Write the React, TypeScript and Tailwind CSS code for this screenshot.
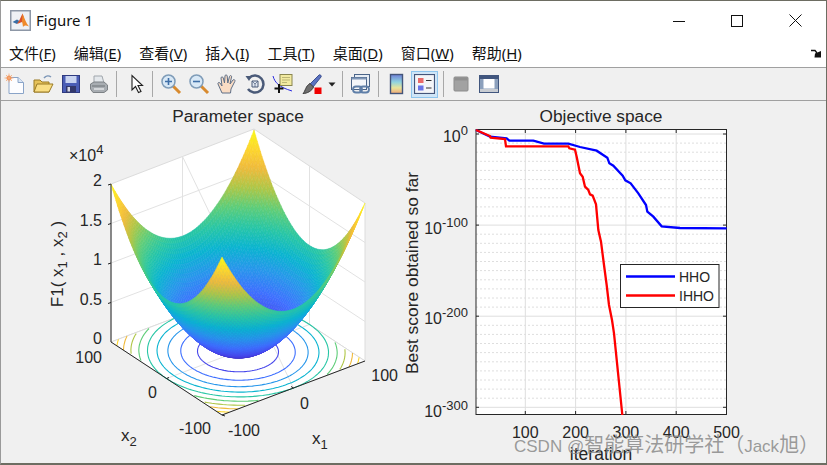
import React from "react";

const parulaStops = [
  [62, 38, 168], [71, 71, 235], [62, 111, 255], [39, 150, 235], [10, 180, 208],
  [40, 198, 165], [95, 205, 120], [175, 198, 70], [240, 186, 60], [253, 215, 45], [249, 251, 21],
];

const parula = (t: number) => {
  const v = Math.min(0.9999, Math.max(0, t)) * (parulaStops.length - 1);
  const i = Math.floor(v);
  const f = v - i;
  const c = parulaStops[i].map((a, k) => Math.round(a + (parulaStops[i + 1][k] - a) * f));
  return `rgb(${c[0]},${c[1]},${c[2]})`;
};

// 3d -> screen, axes corners read off the picture
const project = (x1: number, x2: number, z: number): [number, number] => [
  222 + ((x1 + 100) / 200) * 143 - ((x2 + 100) / 200) * 111,
  415 - ((x1 + 100) / 200) * 54 - ((x2 + 100) / 200) * 73 - (z / 20000) * 158,
];

const pt = (p: [number, number]) => `${p[0].toFixed(1)} ${p[1].toFixed(1)}`;

const buildSurface = () => {
  const n = 70;
  const step = 200 / n;
  const quads: { d: string; color: string; depth: number }[] = [];
  for (let i = 0; i < n; i++) {
    for (let j = 0; j < n; j++) {
      const a = -100 + i * step;
      const b = -100 + j * step;
      const f = (x: number, y: number) => x * x + y * y;
      const mid = f(a + step / 2, b + step / 2);
      quads.push({
        d: `M${pt(project(a, b, f(a, b)))}L${pt(project(a + step, b, f(a + step, b)))}L${pt(
          project(a + step, b + step, f(a + step, b + step))
        )}L${pt(project(a, b + step, f(a, b + step)))}Z`,
        color: parula(mid / 20000),
        depth: 111 * a + 143 * b,
      });
    }
  }
  return quads.sort((p, q) => q.depth - p.depth);
};

const buildContours = () => {
  const out: { d: string; color: string }[] = [];
  for (let level = 2000; level <= 18000; level += 2000) {
    const r = Math.sqrt(level);
    let d = "";
    let pen = false;
    for (let k = 0; k <= 360; k += 2) {
      const a = (k * Math.PI) / 180;
      const x = r * Math.cos(a);
      const y = r * Math.sin(a);
      if (Math.abs(x) > 100 || Math.abs(y) > 100) {
        pen = false;
        continue;
      }
      d += `${pen ? "L" : "M"}${pt(project(x, y, 0))}`;
      pen = true;
    }
    out.push({ d, color: parula(level / 20000) });
  }
  return out;
};

const surface = buildSurface();
const contours = buildContours();

const toPath = (pts: number[][]) => "M" + pts.map((p) => p.join(" ")).join("L");

const blueLine = [
  [228, 75], [270, 95], [320, 100], [328, 107], [400, 107], [432, 116], [505, 116], [540, 126],
  [590, 137], [622, 158], [628, 175], [640, 182], [668, 212], [676, 226], [692, 235], [715, 265],
  [738, 300], [742, 320], [760, 335], [785, 364], [840, 369], [980, 370],
].map(([x, y]) => [x / 3 + 400, y / 3 + 105]);

const redLine = [
  ...[
    [228, 75], [270, 93], [272, 98], [315, 102], [318, 124], [505, 124], [508, 130], [525, 134],
    [530, 155], [540, 205], [548, 215], [555, 245], [565, 255], [570, 268], [578, 272], [588, 298],
    [595, 375], [603, 410], [612, 480],
  ].map(([x, y]) => [x / 3 + 400, y / 3 + 105]),
  ...[[620, 0], [627, 60], [636, 105], [642, 145], [667, 390]].map(([x, y]) => [x / 3 + 400, y / 3 + 285]),
];

const xTicks = [100, 200, 300, 400, 500];
const xAt = (it: number) => 726.5 - (500 - it) * 0.503;
const yAt = (decade: number) => 134 + decade * 0.911;

const Figure = () => {
  const minor: number[] = [];
  for (let d = 10; d <= 300; d += 10) if (d % 100 !== 0) minor.push(d);
  return (
    <svg viewBox="1 101 825 362" className="block w-[825px] h-[362px] font-['Liberation_Sans',Arial,sans-serif]" fontSize="16" fill="#262626">
      {/* 3d axes */}
      <text x="238" y="122" textAnchor="middle" fontSize="17.300">Parameter space</text>
      <path d="M111 342L111 184L254 129L254 288ZM254 288L254 129L365 203L365 361Z" fill="#fff" stroke="#dcdcdc" />
      <path d="M111 342L254 288L365 361L222 415Z" fill="#fff" stroke="#dcdcdc" />
      <path
        d="M111 302.500L254 248.500L365 321.500M111 263L254 209L365 282M111 223.500L254 169.500L365 242.500M182.500 315L182.500 156.500L293.500 388M309.500 324.500L309.500 166M166.500 378.500L309.500 324.500"
        fill="none"
        stroke="#e2e2e2"
      />
      {contours.map((c, i) => (
        <path key={i} d={c.d} fill="none" stroke={c.color} strokeWidth="1.100" />
      ))}
      {surface.map((q, i) => (
        <path key={i} d={q.d} fill={q.color} stroke={q.color} strokeWidth="0.5" />
      ))}
      <path d="M111 184L111 342L222 415L365 361" fill="none" stroke="#262626" strokeWidth="1" />
      <path d="M111 184L108 185M111 223.500L108 224.500M111 263L108 264M111 302.500L108 303.500M166.500 378.500L169 377.500M293.500 388L291 386.500M222 415L225 416" stroke="#262626" fill="none" />
      <text x="69" y="161" fontSize="16">
        ×10<tspan dy="-7" fontSize="13">4</tspan>
      </text>
      <g textAnchor="end">
        <text x="102" y="186">2</text>
        <text x="102" y="226">1.5</text>
        <text x="102" y="265">1</text>
        <text x="102" y="305">0.5</text>
        <text x="102" y="344">0</text>
        <text x="102" y="363">100</text>
        <text x="157" y="398">0</text>
        <text x="211" y="434">-100</text>
        <text x="260" y="436">-100</text>
        <text x="309" y="409">0</text>
        <text x="398" y="381">100</text>
      </g>
      <text x="121" y="441" fontSize="17">
        x<tspan dy="5" fontSize="13">2</tspan>
      </text>
      <text x="312" y="444" fontSize="17">
        x<tspan dy="5" fontSize="13">1</tspan>
      </text>
      <text transform="translate(63 264) rotate(-90)" textAnchor="middle" fontSize="17">
        F1( x<tspan dy="4" fontSize="13">1</tspan>
        <tspan dy="-4"> , x</tspan>
        <tspan dy="4" fontSize="13">2</tspan>
        <tspan dy="-4"> )</tspan>
      </text>

      {/* convergence plot */}
      <text x="601" y="122" textAnchor="middle" fontSize="17.300">Objective space</text>
      <rect x="476" y="129.500" width="250.500" height="285" fill="#fff" />
      <g stroke="#dedede" fill="none">
        {minor.map((d) => (
          <path key={d} d={`M476 ${yAt(d).toFixed(1)}H726.500`} strokeDasharray="2 2" />
        ))}
        {[0, 100, 200, 300].map((d) => (
          <path key={d} d={`M476 ${yAt(d).toFixed(1)}H726.500`} />
        ))}
        {xTicks.map((t) => (
          <path key={t} d={`M${xAt(t).toFixed(1)} 129.500V414.500`} />
        ))}
      </g>
      <rect x="476" y="129.500" width="250.500" height="285" fill="none" stroke="#262626" />
      {xTicks.map((t) => (
        <path key={t} d={`M${xAt(t).toFixed(1)} 414V411M${xAt(t).toFixed(1)} 130V133`} stroke="#262626" />
      ))}
      {[0, 100, 200, 300].map((d) => (
        <path key={d} d={`M476 ${yAt(d).toFixed(1)}h3M726 ${yAt(d).toFixed(1)}h-3`} stroke="#262626" />
      ))}
      <path d={toPath(blueLine)} fill="none" stroke="#0000ff" strokeWidth="2.300" />
      <path d={toPath(redLine)} fill="none" stroke="#ff0000" strokeWidth="2.300" />
      <g textAnchor="end">
        <text x="468" y="141.500">
          10<tspan dy="-7" fontSize="13">0</tspan>
        </text>
        <text x="468" y="233.500">
          10<tspan dy="-7" fontSize="13">-100</tspan>
        </text>
        <text x="468" y="323.500">
          10<tspan dy="-7" fontSize="13">-200</tspan>
        </text>
        <text x="468" y="416.500">
          10<tspan dy="-7" fontSize="13">-300</tspan>
        </text>
      </g>
      <g textAnchor="middle">
        {xTicks.map((t) => (
          <text key={t} x={xAt(t).toFixed(1)} y="438">{t}</text>
        ))}
        <text x="601" y="460" fontSize="17.500">iteration</text>
        <text transform="translate(418 273) rotate(-90)" fontSize="17.400">Best score obtained so far</text>
      </g>
      <rect x="620.500" y="264.500" width="98.500" height="43" fill="#fff" stroke="#262626" />
      <path d="M626 276.500H675" stroke="#0000ff" strokeWidth="2.300" />
      <path d="M626 295.500H675" stroke="#ff0000" strokeWidth="2.300" />
      <text x="679" y="281.500" fontSize="14">HHO</text>
      <text x="679" y="301" fontSize="14">IHHO</text>

      <text x="514" y="452" fill="#8a8a8a" fillOpacity="0.85" fontSize="17">
        CSDN @<tspan fontSize="20" className="font-['Noto_Sans_CJK_SC',sans-serif]">智能算法研学社（</tspan>Jack<tspan fontSize="20" className="font-['Noto_Sans_CJK_SC',sans-serif]">旭）</tspan>
      </text>
    </svg>
  );
};

const MatlabLogo = () => (
  <svg width="21" height="21" viewBox="0 0 21 21">
    <rect x="0" y="0" width="21" height="21" fill="#8d97a6" />
    <rect x="1.500" y="1.500" width="18" height="18" fill="#eef1f5" />
    <path d="M2.500 12L7 9.500L9.500 11L7 14Z" fill="#3a6ea5" />
    <path d="M7 14L9.500 10L12.500 3.500L14 8L12 12Z" fill="#d9522b" />
    <path d="M12.500 3.500C14.500 8 16 13 19 16.500C16 15 14.500 15 13 17C12.500 14 12.500 13 12 12Z" fill="#ef8a2a" />
  </svg>
);

const NewIcon = () => (
  <svg width="22" height="22" viewBox="0 0 22 22">
    <path d="M5 4.500H14L19.500 9.500V20.500H5Z" fill="#fdfdff" stroke="#8aa4c8" />
    <path d="M14 4.500V9.500H19.500" fill="#dbe6f5" stroke="#8aa4c8" />
    <circle cx="5" cy="5" r="2.500" fill="#f08a4b" />
    <path d="M5 0.500V9.500M0.500 5H9.500M2 2L8 8M8 2L2 8" stroke="#f4a877" strokeWidth="0.8" />
  </svg>
);

const OpenIcon = () => (
  <svg width="22" height="22" viewBox="0 0 22 22">
    <path d="M12 5C14 2.500 17 2.500 19 4" fill="none" stroke="#7d97b8" strokeWidth="1.500" />
    <path d="M2 19V7H8L10 9H17V19Z" fill="#e6c25a" stroke="#9a7a24" />
    <path d="M2 19L5 11H21L17 19Z" fill="#f9de84" stroke="#9a7a24" />
  </svg>
);

const SaveIcon = () => (
  <svg width="22" height="22" viewBox="0 0 22 22">
    <rect x="2.500" y="2.500" width="17" height="17" fill="#4a5db5" stroke="#2f3a80" />
    <rect x="5.500" y="3" width="11" height="7" fill="#c9d4f0" />
    <rect x="6" y="13" width="10" height="6.500" fill="#33386b" />
    <rect x="7.500" y="14" width="2.500" height="4.500" fill="#d6d8e4" />
  </svg>
);

const PrintIcon = () => (
  <svg width="22" height="22" viewBox="0 0 22 22">
    <path d="M6 10V3H14L16 10Z" fill="#e4e8ec" stroke="#a0a6ac" />
    <path d="M2.500 11L6 9H16L19.500 12V17L16 19.500H5L2.500 16Z" fill="#a8adb2" stroke="#7d8286" />
    <path d="M4 13H17" stroke="#6f7478" />
    <path d="M6 16H16" stroke="#d4d7da" strokeWidth="2" />
  </svg>
);

const ArrowIcon = () => (
  <svg width="22" height="22" viewBox="0 0 22 22">
    <path d="M6 2.500V17L9.500 13.500L12.500 19.500L15 18.500L12 12.500H16.500Z" fill="#fff" stroke="#222" strokeWidth="1.100" />
  </svg>
);

const Magnifier = ({ plus }: { plus: boolean }) => (
  <svg width="22" height="22" viewBox="0 0 22 22">
    <path d="M13 13L20 20" stroke="#d88a2e" strokeWidth="3" />
    <circle cx="8.500" cy="8.500" r="6.500" fill="#d8e8f6" stroke="#7f9cb8" strokeWidth="1.500" />
    <path d={plus ? "M5 8.500H12M8.500 5V12" : "M5 8.500H12"} stroke="#3f6fa8" strokeWidth="1.600" />
  </svg>
);

const HandIcon = () => (
  <svg width="22" height="22" viewBox="0 0 22 22">
    <path
      d="M6 20L2 11C1.500 9.500 3 9 4 10L6 13L5 5C5 3.500 7 3.500 7.300 5L8.500 10L9 3C9 1.500 11 1.500 11.200 3L11.800 10L13.500 3.500C14 2 16 2.500 15.500 4L14 11L17 7C18 6 19.500 7 18.800 8.500L15 16L14.500 20Z"
      fill="#f9dcc4"
      stroke="#5f6f86"
      strokeWidth="1"
    />
  </svg>
);

const RotateIcon = () => (
  <svg width="22" height="22" viewBox="0 0 22 22">
    <path d="M5 5A8.500 8.500 0 1 1 4 16" fill="none" stroke="#4a5a78" strokeWidth="2.500" />
    <path d="M1.500 3L8 3L5 8Z" fill="#4a5a78" />
    <path d="M8 8H14V14H8Z" fill="#dfe6f0" stroke="#4a5a78" />
    <path d="M8 8L11 11L14 8M11 11V14" fill="none" stroke="#4a5a78" strokeWidth="0.700" />
  </svg>
);

const DatatipIcon = () => (
  <svg width="22" height="22" viewBox="0 0 22 22">
    <path d="M1 3C3 10 7 14 20 18" fill="none" stroke="#2a2ae0" />
    <rect x="8" y="1.500" width="12" height="11" fill="#f2eaa0" stroke="#8a8650" />
    <path d="M10 4.500H18M10 7H18M10 9.500H15" stroke="#bdb676" />
    <path d="M7 11V20M2.500 15.500H11.500" stroke="#111" strokeWidth="2" />
  </svg>
);

const BrushIcon = () => (
  <svg width="22" height="22" viewBox="0 0 22 22">
    <path d="M9 11L18 2C19 1 21 3 20 4L12 14Z" fill="#5a72c0" stroke="#3c4f90" />
    <path d="M9 10.500L12.500 14C11 18 6 20.500 2 20.500C4.500 18 4.500 13 9 10.500Z" fill="#6e6e6e" stroke="#3d3d3d" />
    <rect x="13.500" y="14.500" width="7" height="6.500" fill="#f00000" />
  </svg>
);

const LinkIcon = () => (
  <svg width="22" height="22" viewBox="0 0 22 22">
    <rect x="4.500" y="1.500" width="15" height="12" fill="#e6edf5" stroke="#4a6488" />
    <rect x="1.500" y="4.500" width="15" height="12" fill="#f3f6fa" stroke="#4a6488" />
    <path d="M1.500 4.500H16.500V6.500H1.500Z" fill="#7f97b8" />
    <rect x="3" y="13.500" width="9" height="6" rx="3" fill="none" stroke="#5f7fa8" strokeWidth="1.800" />
    <rect x="10" y="13.500" width="9" height="6" rx="3" fill="none" stroke="#5f7fa8" strokeWidth="1.800" />
  </svg>
);

const ColorbarIcon = () => (
  <svg width="16" height="22" viewBox="0 0 16 22">
    <defs>
      <linearGradient id="cbar" x1="0" y1="0" x2="0" y2="1">
        <stop offset="0" stopColor="#6f7fd8" />
        <stop offset="0.400" stopColor="#8fd4e0" />
        <stop offset="0.700" stopColor="#e8e49a" />
        <stop offset="1" stopColor="#f0a878" />
      </linearGradient>
    </defs>
    <rect x="1.500" y="1.500" width="12" height="19" fill="url(#cbar)" stroke="#44557a" strokeWidth="1.400" />
  </svg>
);

const LegendIcon = () => (
  <svg width="21" height="20" viewBox="0 0 21 20">
    <rect x="0.500" y="0.500" width="20" height="19" fill="#f4f5f8" stroke="#44557a" strokeWidth="1.200" />
    <rect x="4" y="4" width="5.500" height="5" fill="#ea6a6a" />
    <rect x="4" y="11.500" width="5.500" height="5" fill="#6a74e8" />
    <path d="M12 6.500H17.500M12 14H17.500" stroke="#333" strokeWidth="1.200" />
  </svg>
);

const GrayBoxIcon = () => (
  <svg width="16" height="16" viewBox="0 0 16 16">
    <rect x="1" y="1" width="14" height="14" rx="1" fill="#a2a2a2" stroke="#8c8c8c" />
    <rect x="1.500" y="1.500" width="13" height="3" fill="#8f8f8f" />
  </svg>
);

const PlotToolsIcon = () => (
  <svg width="20" height="18" viewBox="0 0 20 18">
    <rect x="0.500" y="0.500" width="19" height="17" fill="#8ca0bc" stroke="#41567e" />
    <rect x="1" y="1" width="18" height="3" fill="#41567e" />
    <rect x="4.500" y="4" width="11" height="9.500" fill="#fff" />
    <rect x="1" y="14" width="18" height="3" fill="#c8ccd2" />
  </svg>
);

const Sep = ({ className }: { className: string }) => <div className={`w-px h-[26px] bg-[#a8a8a8] ${className}`} />;

const Btn = ({ children }: { children: React.ReactNode }) => (
  <div className="w-[28px] h-[26px] flex items-center justify-center shrink-0">{children}</div>
);

const menus = [
  ["文件(", "F", ")"],
  ["编辑(", "E", ")"],
  ["查看(", "V", ")"],
  ["插入(", "I", ")"],
  ["工具(", "T", ")"],
  ["桌面(", "D", ")"],
  ["窗口(", "W", ")"],
  ["帮助(", "H", ")"],
];

export default function App() {
  return (
    <div className="w-[827px] h-[465px] flex flex-col overflow-hidden bg-white border border-[#6d6d62] border-l-[#9a9a9a] border-b-2 font-['Noto_Sans','Noto_Sans_CJK_SC',sans-serif]">
      {/* Title bar */}
      <div className="h-[39px] flex items-center shrink-0 pl-[9px]">
        <MatlabLogo />
        <span className="ml-[5px] text-[15px] text-[#111]">Figure 1</span>
        <div className="ml-auto flex items-center mr-[24px] gap-[46px]">
          <svg width="12" height="12" viewBox="0 0 12 12">
            <path d="M0 6.500H12" stroke="#111" />
          </svg>
          <svg width="12" height="12" viewBox="0 0 12 12">
            <rect x="0.500" y="0.500" width="11" height="11" fill="none" stroke="#111" />
          </svg>
          <svg width="13" height="13" viewBox="0 0 13 13">
            <path d="M0.500 0.500L12.500 12.500M12.500 0.500L0.500 12.500" stroke="#111" />
          </svg>
        </div>
      </div>

      {/* Menu bar */}
      <div className="h-[28px] flex items-center shrink-0 pl-[8px] gap-[18px] text-[15px] text-[#111] border-b border-[#a0a0a0] relative">
        {menus.map(([a, k, b]) => (
          <span key={k} className="whitespace-nowrap leading-none">
            {a}
            <span className="underline">{k}</span>
            {b}
          </span>
        ))}
        <svg className="ml-auto mr-[4px]" width="11" height="9" viewBox="0 0 11 9">
          <path d="M0 1.500H4L6 4" fill="none" stroke="#111" strokeWidth="1.400" />
          <path d="M4 4.500L10 2V8.500H3.500Z" fill="#111" />
        </svg>
      </div>

      {/* Toolbar */}
      <div className="h-[33px] flex items-center shrink-0 bg-[#f0f0f0] border-b border-[#a0a0a0]">
        <Btn><NewIcon /></Btn>
        <Btn><OpenIcon /></Btn>
        <Btn><SaveIcon /></Btn>
        <Btn><PrintIcon /></Btn>
        <Sep className="ml-[3px] mr-[6px]" />
        <Btn><ArrowIcon /></Btn>
        <Sep className="ml-px mr-[4px]" />
        <Btn><Magnifier plus /></Btn>
        <Btn><Magnifier plus={false} /></Btn>
        <Btn><HandIcon /></Btn>
        <Btn><RotateIcon /></Btn>
        <Btn><DatatipIcon /></Btn>
        <div className="ml-px"><Btn><BrushIcon /></Btn></div>
        <svg className="ml-[2px]" width="8" height="5" viewBox="0 0 8 5">
          <path d="M0.500 0.500H7.500L4 4.500Z" fill="#222" />
        </svg>
        <Sep className="ml-[6px] mr-[4px]" />
        <Btn><LinkIcon /></Btn>
        <Sep className="ml-[3px] mr-[4px]" />
        <Btn><ColorbarIcon /></Btn>
        <div className="w-[27px] h-[27px] flex items-center justify-center bg-[#cfe5f7] border border-[#8ec5ee]">
          <LegendIcon />
        </div>
        <Sep className="ml-[5px] mr-[3px]" />
        <Btn><GrayBoxIcon /></Btn>
        <Btn><PlotToolsIcon /></Btn>
      </div>

      {/* Figure canvas */}
      <div className="flex-1 bg-[#f0f0f0] overflow-hidden">
        <Figure />
      </div>
    </div>
  );
}
